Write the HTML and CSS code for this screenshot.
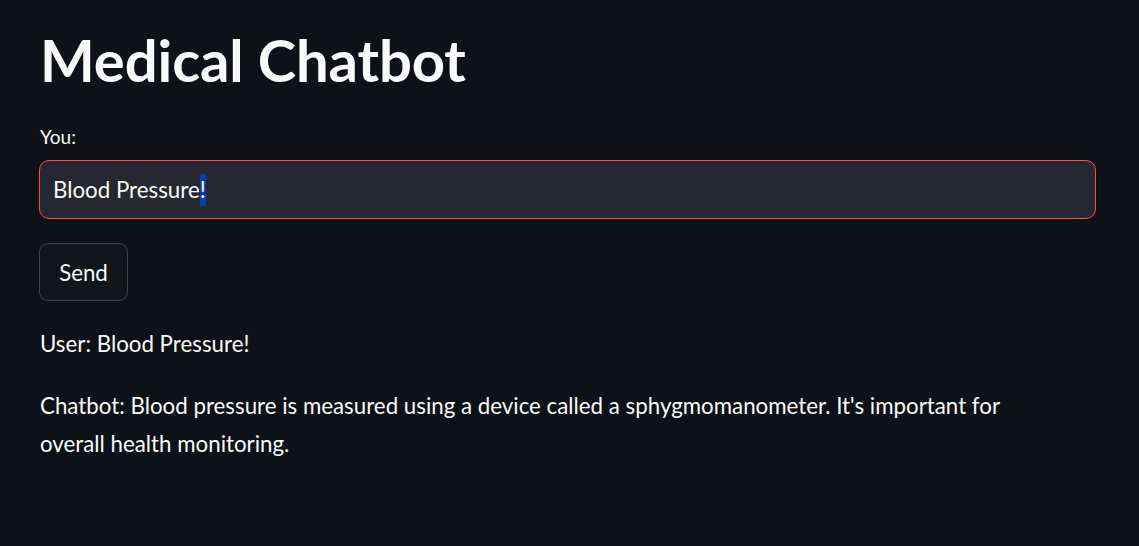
FILE: index.html
```html
<!DOCTYPE html>
<html>
<head>
<meta charset="utf-8">
<link rel="stylesheet" href="styles.css">
</head>
<body>
<main class="app">
  <h1 class="title">Medical Chatbot</h1>
  <div class="field">
    <label class="label">You:</label>
    <div class="input">Blood Pressure<span class="sel">!</span></div>
  </div>
  <button class="btn">Send</button>
  <p class="msg">User: Blood Pressure!</p>
  <p class="msg">Chatbot: Blood pressure is measured using a device called a sphygmomanometer. It's important for overall health monitoring.</p>
</main>
</body>
</html>
```
FILE: styles.css
```css
html, body {
  margin: 0;
  background: #0e1117;
  color: #fafafa;
  font-family: Lato, "Noto Sans", sans-serif;
}
.app {
  width: 1056px;
  padding: 22px 0 0 40px;
  display: flex;
  flex-direction: column;
  align-items: flex-start;
}
.title {
  margin: 0;
  font-size: 58px;
  font-weight: 700;
  line-height: 76px;
  letter-spacing: -0.1px;
}
.field {
  margin-top: 27px;
  width: 100%;
  display: flex;
  flex-direction: column;
}
.label {
  font-size: 19px;
  line-height: 24px;
  margin-bottom: 11px;
}
.input {
  box-sizing: border-box;
  height: 59px;
  margin-left: -1px;
  border: 1px solid #ff4b4b;
  border-radius: 10px;
  background: #262730;
  padding: 0 13px;
  display: flex;
  align-items: center;
  font-size: 22.3px;
}
.sel {
  background: #0b3ea8;
  line-height: 32px;
}
.btn {
  margin-top: 24px;
  margin-left: -1px;
  box-sizing: border-box;
  height: 58px;
  width: 89px;
  border: 1px solid rgba(250,250,250,0.2);
  border-radius: 9px;
  background: #12151c;
  color: #fafafa;
  font-family: inherit;
  font-size: 22.3px;
  padding: 0;
}
.msg {
  margin: 0;
  font-size: 22.3px;
  line-height: 38px;
}
.btn + .msg { margin-top: 24px; }
.msg + .msg { margin-top: 24px; width: 1000px; }
```
